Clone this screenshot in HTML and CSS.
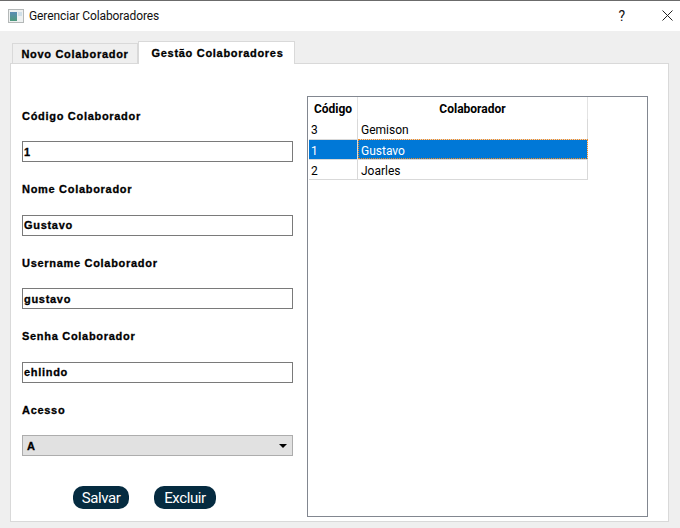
FILE: index.html
```html
<!DOCTYPE html>
<html lang="pt-BR">
<head>
    <meta charset="UTF-8">
    <meta name="viewport" content="width=device-width, initial-scale=1.0">
    <title>Gerenciar Colaboradores</title>
    <link rel="stylesheet" href="styles.css">
</head>
<body>
    <div class="titlebar">
        <svg class="app-icon" width="16" height="14" viewBox="0 0 16 14">
            <defs>
                <linearGradient id="iconFill" x1="0" y1="0" x2="0" y2="1">
                    <stop offset="0" stop-color="#5a8db5"/>
                    <stop offset="1" stop-color="#4f9a7c"/>
                </linearGradient>
            </defs>
            <rect x="0.5" y="0.5" width="15" height="13" fill="#eef1f1" stroke="#b4b8b8"/>
            <rect x="2" y="3" width="7" height="9" fill="url(#iconFill)"/>
            <rect x="10" y="3" width="4" height="4" fill="#cfdfe8"/>
        </svg>
        <span class="title-text">Gerenciar Colaboradores</span>
        <span class="help-btn">?</span>
        <svg class="close-btn" width="11" height="11" viewBox="0 0 11 11">
            <path d="M0.5 0.5L10.5 10.5M10.5 0.5L0.5 10.5" stroke="#222" stroke-width="1" fill="none"/>
        </svg>
    </div>

    <div class="tabs">
        <div class="tab">Novo Colaborador</div>
        <div class="tab tab-active">Gestão Colaboradores</div>
    </div>

    <div class="pane">
        <div class="form-col">
            <div class="field">
                <label>Código Colaborador</label>
                <div class="input">1</div>
            </div>
            <div class="field">
                <label>Nome Colaborador</label>
                <div class="input">Gustavo</div>
            </div>
            <div class="field">
                <label>Username Colaborador</label>
                <div class="input">gustavo</div>
            </div>
            <div class="field">
                <label>Senha Colaborador</label>
                <div class="input">ehlindo</div>
            </div>
            <div class="field">
                <label>Acesso</label>
                <div class="input combo">A<span class="arrow"></span></div>
            </div>
            <div class="button-row">
                <button class="btn btn-save">Salvar</button>
                <button class="btn btn-delete">Excluir</button>
            </div>
        </div>

        <div class="table-frame">
            <table class="grid">
                <thead>
                    <tr><th class="col-code">Código</th><th class="col-name">Colaborador</th></tr>
                </thead>
                <tbody>
                    <tr><td class="code">3</td><td>Gemison</td></tr>
                    <tr class="selected"><td class="code">1</td><td class="current">Gustavo</td></tr>
                    <tr><td class="code">2</td><td>Joarles</td></tr>
                </tbody>
            </table>
        </div>
    </div>
</body>
</html>
```

FILE: styles.css
```css
body {
    margin: 0;
    height: 528px;
    overflow: hidden;
    background-color: #efefef;
    font-family: "Liberation Sans", Arial, sans-serif;
    color: #000;
}

.titlebar {
    display: flex;
    align-items: center;
    height: 30px;
    border-top: 1px solid #6b6b6b;
    background-color: #fff;
    font-family: Roboto, "Noto Sans", sans-serif;
    font-size: 12px;
    color: #111;
}

.app-icon {
    margin-left: 8px;
}

.title-text {
    margin-left: 5px;
    flex: 1;
    letter-spacing: -0.1px;
}

.help-btn {
    font-size: 14px;
    margin-right: 37px;
}

.close-btn {
    margin-right: 7px;
    margin-bottom: 2px;
}

.tabs {
    display: flex;
    align-items: flex-end;
    height: 22px;
    margin-top: 10px;
    padding-left: 12px;
}

.tab,
.field label,
.input {
    font-size: 11px;
    font-weight: bold;
    letter-spacing: 0.7px;
    -webkit-text-stroke: 0.3px #000;
}

.tab {
    box-sizing: border-box;
    width: 126px;
    height: 20px;
    padding-top: 4px;
    text-align: center;
    background-color: #efefef;
    border: 1px solid #d9d9d9;
    border-bottom: none;
}

.tab-active {
    width: 157px;
    height: 23px;
    margin-bottom: -1px;
    padding-top: 5px;
    padding-left: 2px;
    background-color: #fff;
    position: relative;
}

.pane {
    box-sizing: border-box;
    display: flex;
    width: 659px;
    height: 459px;
    margin-left: 10px;
    background-color: #fff;
    border: 1px solid #d9d9d9;
}

.form-col {
    width: 271px;
    margin-left: 11px;
    padding-top: 44.6px;
}

.field {
    height: 73.5px;
}

.field label {
    display: block;
    height: 14px;
    line-height: 14px;
}

.input {
    box-sizing: border-box;
    display: flex;
    align-items: center;
    height: 21px;
    margin-top: 18.5px;
    padding-left: 1px;
    border: 1px solid #7a7a7a;
}

.combo {
    justify-content: space-between;
    padding-left: 4px;
    padding-right: 5px;
    background-color: #e1e1e1;
    border-color: #adadad;
}

.arrow {
    width: 0;
    height: 0;
    border-left: 4px solid transparent;
    border-right: 4px solid transparent;
    border-top: 4px solid #000;
}

.button-row {
    display: flex;
    gap: 25px;
    margin-top: 10.4px;
    padding-left: 51px;
}

.btn {
    height: 23px;
    padding: 0;
    border: none;
    border-radius: 10px;
    background-color: #052b40;
    color: #fff;
    font-family: Roboto, "Noto Sans", sans-serif;
    font-size: 15px;
    letter-spacing: -0.4px;
}

.btn-save {
    width: 56px;
}

.btn-delete {
    width: 62px;
}

.table-frame {
    box-sizing: border-box;
    width: 341px;
    height: 421px;
    margin-top: 32px;
    margin-left: 14px;
    padding-left: 1px;
    border: 1px solid #828790;
    background-color: #fff;
}

.grid {
    border-collapse: collapse;
    table-layout: fixed;
    width: 279px;
    font-family: Roboto, "Noto Sans", sans-serif;
    font-size: 12px;
}

.grid th {
    height: 21px;
    padding: 1px 0 0;
    font-weight: bold;
    text-align: center;
    border-right: 1px solid #e3e3e3;
}

.col-code {
    width: 48px;
}

.grid td {
    box-sizing: border-box;
    height: 20px;
    padding: 3px 0 0 3px;
    border-right: 1px solid #d9d9d9;
    border-bottom: 1px solid #d9d9d9;
}

.grid td.code {
    padding-left: 2px;
}

.selected td {
    background-color: #0078d7;
    color: #fff;
}

.grid td.current {
    outline: 1px dotted #f08a24;
    outline-offset: -1px;
}
```
